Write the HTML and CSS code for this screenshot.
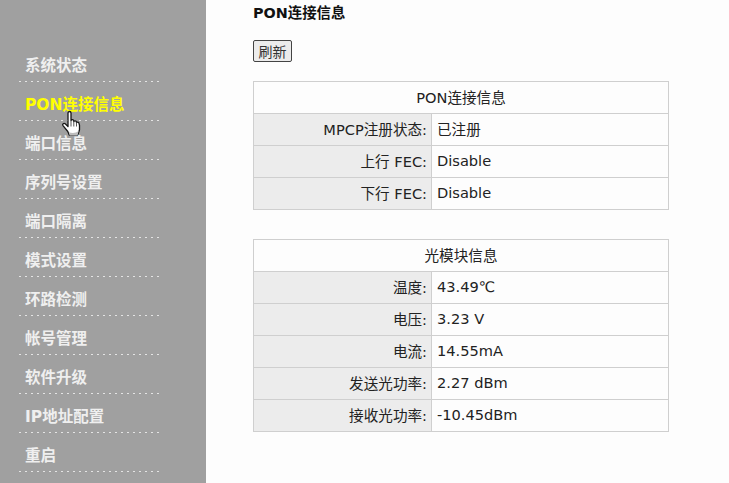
FILE: index.html
```html
<!DOCTYPE html>
<html lang="zh-CN">
<head>
    <meta charset="UTF-8">
    <meta name="viewport" content="width=device-width, initial-scale=1.0">
    <title>PON连接信息</title>
    <link rel="stylesheet" href="styles.css">
</head>
<body>
    <div class="main-container">
        <div class="side-menu">
            <a class="menu-item">系统状态</a>
            <a class="menu-item active">PON连接信息
                <svg class="hand-cursor" width="22" height="28" viewBox="0 0 22 28">
                    <path d="M7 3c0-2 3-2 3 0v7.5c.3-1.2 2.6-1.2 2.8.2v1c.3-1.2 2.5-1.2 2.7.2v1c.3-1 2.3-1 2.5.4l.5 2v4.4l-1.7 5.4H8.2L6.8 21.500 2 15.600c-1.100-1.500.8-3 2.200-1.800L7 16.500z" fill="#ffffff" stroke="#161616" stroke-width="1.300" stroke-linejoin="round"/>
                    <path d="M10 11v5.500M12.800 11.500v5M15.500 12.500v4" stroke="#555555" stroke-width="1" fill="none"/>
                    <path d="M8.800 25.400h7.600l1.300-4.400c-2.500 2-6.500 2.400-9.800 1.200z" fill="#bdbdbd"/>
                </svg>
            </a>
            <a class="menu-item">端口信息</a>
            <a class="menu-item">序列号设置</a>
            <a class="menu-item">端口隔离</a>
            <a class="menu-item">模式设置</a>
            <a class="menu-item">环路检测</a>
            <a class="menu-item">帐号管理</a>
            <a class="menu-item">软件升级</a>
            <a class="menu-item">IP地址配置</a>
            <a class="menu-item">重启</a>
        </div>
        <div class="content-container">
            <h1>PON连接信息</h1>
            <button type="button" class="custom-button">刷新</button>
            <table class="info-table first-table">
                <colgroup><col class="label-col"><col></colgroup>
                <tr><th colspan="2">PON连接信息</th></tr>
                <tr><td class="label">MPCP注册状态:</td><td>已注册</td></tr>
                <tr><td class="label">上行 FEC:</td><td>Disable</td></tr>
                <tr><td class="label">下行 FEC:</td><td>Disable</td></tr>
            </table>
            <table class="info-table">
                <colgroup><col class="label-col"><col></colgroup>
                <tr><th colspan="2">光模块信息</th></tr>
                <tr><td class="label">温度:</td><td>43.49℃</td></tr>
                <tr><td class="label">电压:</td><td>3.23 V</td></tr>
                <tr><td class="label">电流:</td><td>14.55mA</td></tr>
                <tr><td class="label">发送光功率:</td><td>2.27 dBm</td></tr>
                <tr><td class="label">接收光功率:</td><td>-10.45dBm</td></tr>
            </table>
        </div>
    </div>
</body>
</html>
```

FILE: styles.css
```css
html, body {
    margin: 0;
    padding: 0;
    height: 100%;
    overflow: hidden;
    background: #fdfdfd;
}
body {
    font-family: "DejaVu Sans", "Noto Sans CJK SC", sans-serif;
    font-size: 14.6px;
    color: #222222;
}
.main-container {
    display: flex;
    height: 483px;
}
.side-menu {
    width: 206px;
    flex-shrink: 0;
    box-sizing: border-box;
    background-color: #a0a0a0;
    padding: 43px 0 0 19px;
}
.menu-item {
    display: block;
    position: relative;
    box-sizing: border-box;
    width: 142px;
    height: 39px;
    padding: 14px 0 0 6px;
    font-size: 15.5px;
    line-height: 18px;
    font-weight: bold;
    color: #efefef;
    background-image: linear-gradient(to right, #e4e4e4 2px, transparent 2px);
    background-size: 6px 1px;
    background-repeat: repeat-x;
    background-position: left bottom;
}
.menu-item.active {
    color: #ffff00;
}
.hand-cursor {
    position: absolute;
    left: 42px;
    top: 28px;
}
.content-container {
    padding: 4px 0 0 47px;
}
h1 {
    margin: 0 0 18px 0;
    font-size: 14.4px;
    line-height: 18px;
    font-weight: bold;
    color: #111111;
}
.custom-button {
    display: block;
    box-sizing: border-box;
    width: 39px;
    height: 22px;
    padding: 0;
    font-family: "DejaVu Sans", "Noto Sans CJK SC", sans-serif;
    font-size: 14px;
    color: #333333;
    background-color: #ececec;
    border: 1px solid #444444;
    border-radius: 2px;
}
.info-table {
    width: 416px;
    margin-bottom: 29px;
    border-collapse: collapse;
    border: 1px solid #cfcfcf;
    table-layout: fixed;
}
.first-table {
    margin-top: 19px;
}
.label-col {
    width: 178px;
}
.info-table th {
    height: 29px;
    padding: 0 0 2px 0;
    font-weight: normal;
    text-align: center;
    border: 1px solid #cfcfcf;
}
.info-table td {
    height: 29px;
    padding: 0 4px 2px 5px;
    border: 1px solid #cfcfcf;
}
.info-table td.label {
    text-align: right;
    background-color: #ececec;
}
```
